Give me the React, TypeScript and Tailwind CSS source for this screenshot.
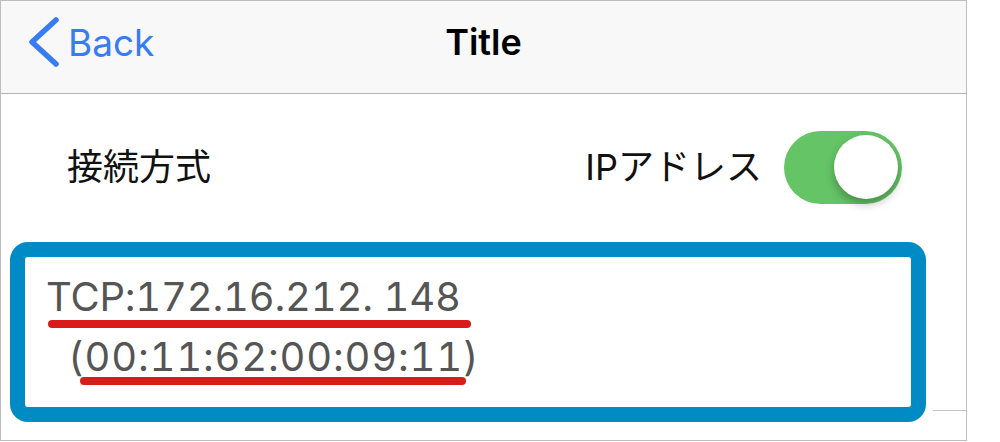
import React from "react";

const latin = "font-['Inter','Noto_Sans_CJK_JP',sans-serif]";

function Chevron() {
  return (
    <svg width="30" height="50" viewBox="0 0 30 50" className="block">
      <polyline
        points="27,3 3,25 27,47"
        fill="none"
        stroke="#387cf4"
        strokeWidth="5.5"
        strokeLinecap="round"
        strokeLinejoin="round"
      />
    </svg>
  );
}

export default function App() {
  return (
    <div className={`w-[1000px] h-[442px] bg-white ${latin}`}>
      <div className="w-[967px] h-[441px] border border-[#bdbdbd] flex flex-col">
        {/* Nav bar */}
        <div className="h-[93px] shrink-0 bg-[#f8f8f8] border-b border-[#b4b4b4] grid grid-cols-[1fr_auto_1fr] items-center pb-[10px]">
          <div className="flex items-center pl-[28px] gap-[9px]">
            <Chevron />
            <span className="text-[37px] leading-none text-[#387cf4]">Back</span>
          </div>
          <div className="text-[36px] leading-none font-semibold text-black">Title</div>
          <div />
        </div>

        {/* Row */}
        <div className="h-[146px] shrink-0 flex items-center justify-between pl-[66px] pr-[64px]">
          <span className="text-[36px] leading-none text-[#111]">接続方式</span>
          <div className="flex items-center gap-[22px]">
            <span className="text-[36px] leading-none text-[#111]">IPアドレス</span>
            <div className="w-[118px] h-[73px] rounded-full bg-[#65c466] flex items-center justify-end pr-[4px]">
              <div className="w-[64px] h-[64px] rounded-full bg-white shadow-[0_5px_10px_rgba(0,0,0,0.28)]" />
            </div>
          </div>
        </div>

        {/* Annotated cell */}
        <div className="flex items-start mt-[2px]">
          <div className="ml-[9px] w-[916px] h-[180px] shrink-0 rounded-[18px] border-[15px] border-[#008bc4] bg-white pl-[21px] pt-[20px] text-[#555555]">
            <div className="text-[40px] leading-[40px] whitespace-pre tabular-nums tracking-[-0.2px]">TCP:172.16.212. 148</div>
            <div className="mt-[3px] ml-[2px] w-[423px] h-[8px] rounded-full bg-[#d81b1b]" />
            <div className="mt-[9px] pl-[22px] text-[40px] leading-[40px] whitespace-pre tabular-nums tracking-[0.8px]">(00:11:62:00:09:11)</div>
            <div className="ml-[34px] w-[386px] h-[8px] rounded-full bg-[#d81b1b]" />
          </div>
          <div className="ml-[7px] flex-1 mt-[168px] border-t border-[#c4c4c4]" />
        </div>
      </div>
    </div>
  );
}
